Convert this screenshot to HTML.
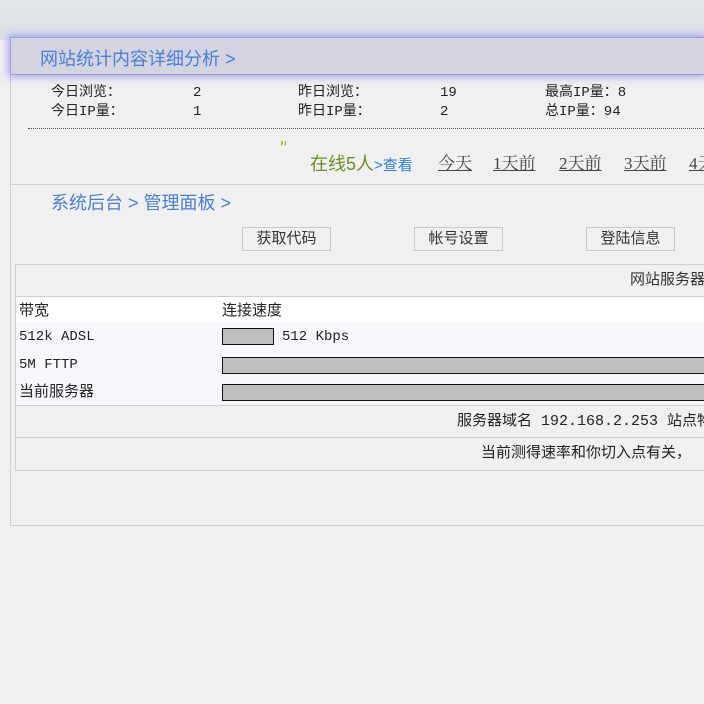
<!DOCTYPE html>
<html><head><meta charset="utf-8"><style>
*{margin:0;padding:0;box-sizing:border-box}
html,body{width:704px;height:704px;overflow:hidden}
body{background:#f0f0f0;font-family:"Liberation Mono","Noto Sans CJK SC",monospace;font-size:14px;color:#222}
#w{position:relative;width:704px;height:704px;overflow:hidden}
.top{position:absolute;left:0;top:0;width:704px;height:40px;background:linear-gradient(#e2e5e8,#dfe3e6)}
.panel{position:absolute;left:10px;top:37px;width:694px;height:489px;border:1px solid #cfcfcf;border-right:none;background:#f0f0f0}
.hdr{position:absolute;left:10px;top:37px;width:694px;height:38px;background:#d4d3e2;border:1px solid #9c9ce0;border-right:none;box-shadow:0 0 8px 2px rgba(110,110,230,.55)}
.hdr span{position:absolute;left:29px;top:7px;font-family:"Liberation Sans","Noto Sans CJK SC",sans-serif;font-size:18px;color:#4a80d2}
.a{position:absolute;white-space:nowrap;line-height:18px;overflow:hidden}
.blue{font-family:"Liberation Sans","Noto Sans CJK SC",sans-serif;color:#4a80d2;font-size:18px}
.u{text-decoration:underline;font-size:17px;color:#444;font-family:"Liberation Serif","Noto Serif CJK SC",serif}
.btn{position:absolute;top:227px;width:89px;height:24px;border:1px solid #c8c8c8;text-align:center;font-size:15px;line-height:22px;color:#333;font-family:"Liberation Sans","Noto Sans CJK SC",sans-serif}
.tbl{position:absolute;left:15px;top:264px;width:689px;height:207px;border:1px solid #cfcfcf;border-right:none}
.hl{position:absolute;left:15px;width:689px;height:1px;background:#cfcfcf}
.bar{position:absolute;height:17px;background:#bfbfbf;border:1px solid #111;border-right:none}
</style></head><body><div id="w">
<div class="top"></div>
<div class="panel"></div>
<div class="hdr"><span>网站统计内容详细分析 &gt;</span></div>

<div class="a" style="left:51px;top:84px">今日浏览：</div>
<div class="a" style="left:193px;top:84px">2</div>
<div class="a" style="left:298px;top:84px">昨日浏览：</div>
<div class="a" style="left:440px;top:84px">19</div>
<div class="a" style="left:545px;top:84px">最高IP量：8</div>
<div class="a" style="left:51px;top:103px">今日IP量：</div>
<div class="a" style="left:193px;top:103px">1</div>
<div class="a" style="left:298px;top:103px">昨日IP量：</div>
<div class="a" style="left:440px;top:103px">2</div>
<div class="a" style="left:545px;top:103px">总IP量：94</div>
<div style="position:absolute;left:28px;top:128px;width:676px;border-top:1px dotted #555;height:1px"></div>

<div class="a" style="left:279px;top:140px;color:#9ac616;font-size:20px;font-style:italic;font-family:'Liberation Sans',sans-serif">"</div>
<div class="a" style="left:310px;top:154px;font-family:'Liberation Sans','Noto Sans CJK SC',sans-serif;font-size:18px;line-height:20px;color:#6b8e23">在线5人<span style="color:#2d7ee0;font-size:15px">&gt;查看</span></div>
<div class="a u" style="left:438px;top:154px;line-height:20px">今天</div>
<div class="a u" style="left:493px;top:154px;line-height:20px">1天前</div>
<div class="a u" style="left:559px;top:154px;line-height:20px">2天前</div>
<div class="a u" style="left:624px;top:154px;line-height:20px">3天前</div>
<div class="a u" style="left:689px;top:154px;width:15px;line-height:20px">4天前</div>
<div style="position:absolute;left:10px;top:184px;width:694px;height:1px;background:#cfcfcf"></div>

<div class="a blue" style="left:51px;top:193px;line-height:20px">系统后台 &gt; 管理面板 &gt;</div>

<div class="btn" style="left:242px">获取代码</div>
<div class="btn" style="left:414px">帐号设置</div>
<div class="btn" style="left:586px">登陆信息</div>

<div class="tbl"></div>
<div class="a" style="left:630px;top:271px;width:74px;font-family:'Liberation Sans','Noto Sans CJK SC',sans-serif;font-size:15px;color:#333">网站服务器信息</div>
<div class="hl" style="top:296px"></div>
<div style="position:absolute;left:16px;top:297px;width:688px;height:26px;background:#fff"></div>
<div style="position:absolute;left:16px;top:323px;width:688px;height:82px;background:#f7f8fc"></div>
<div class="a" style="left:19px;top:302px;font-size:15px;font-family:'Liberation Sans','Noto Sans CJK SC',sans-serif">带宽</div>
<div class="a" style="left:222px;top:302px;font-size:15px;font-family:'Liberation Sans','Noto Sans CJK SC',sans-serif">连接速度</div>
<div class="a" style="left:19px;top:328px">512k ADSL</div>
<div class="bar" style="left:222px;top:328px;width:52px;border-right:1px solid #111"></div>
<div class="a" style="left:282px;top:328px">512 Kbps</div>
<div class="a" style="left:19px;top:356px">5M FTTP</div>
<div class="bar" style="left:222px;top:357px;width:482px"></div>
<div class="a" style="left:19px;top:383px;font-size:15px;font-family:'Liberation Sans','Noto Sans CJK SC',sans-serif">当前服务器</div>
<div class="bar" style="left:222px;top:384px;width:482px"></div>
<div class="hl" style="top:405px"></div>
<div class="a" style="left:457px;top:413px;width:247px;font-size:15px">服务器域名 192.168.2.253 站点物理路径</div>
<div class="hl" style="top:437px"></div>
<div class="a" style="left:481px;top:445px;width:223px;font-size:15px">当前测得速率和你切入点有关，</div>
</div></body></html>
